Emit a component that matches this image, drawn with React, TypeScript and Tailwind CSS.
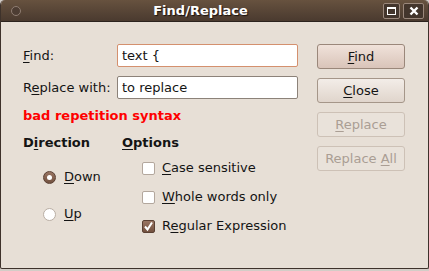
import React from 'react';

const font = { fontFamily: '"DejaVu Sans", Verdana, sans-serif' };

function U({ children }: { children: React.ReactNode }) {
  return <span className="underline decoration-1 underline-offset-[2px]">{children}</span>;
}

function Radio({ checked }: { checked?: boolean }) {
  if (checked) {
    return (
      <span className="flex h-[13px] w-[13px] items-center justify-center rounded-full border border-[#5a4033] bg-gradient-to-b from-[#9a7664] to-[#73513f]">
        <span className="h-[5px] w-[5px] rounded-full bg-white" />
      </span>
    );
  }
  return <span className="h-[13px] w-[13px] rounded-full border border-[#b9aea4] bg-white" />;
}

function Check({ checked }: { checked?: boolean }) {
  if (checked) {
    return (
      <span className="flex h-[13px] w-[13px] items-center justify-center rounded-[2px] border border-[#5a4033] bg-gradient-to-b from-[#9a7664] to-[#73513f]">
        <svg width="11" height="11" viewBox="0 0 11 11">
          <path d="M2 5.5 L4.5 8.5 L9 1.5" fill="none" stroke="white" strokeWidth="2" />
        </svg>
      </span>
    );
  }
  return <span className="h-[13px] w-[13px] rounded-[2px] border border-[#b3a79d] bg-white" />;
}

function Btn({ children, kind }: { children: React.ReactNode; kind: 'default' | 'normal' | 'disabled' }) {
  const cls =
    kind === 'default'
      ? 'border-[#9a877a] bg-gradient-to-b from-[#f0e2da] to-[#d9c4b9] text-[#141414]'
      : kind === 'normal'
        ? 'border-[#a59689] bg-gradient-to-b from-[#f3ede8] to-[#e0d5cc] text-[#141414]'
        : 'border-[#cdc1b6] bg-[#e9e2da] text-[#aa9e94]';
  return (
    <div className={`flex h-[25px] w-[88px] items-center justify-center rounded-[3px] border text-[13px] ${cls}`}>
      <span>{children}</span>
    </div>
  );
}

export default function App() {
  return (
    <div className="h-[271px] w-[429px] bg-[#d3cdc7]" style={font}>
      <div className="flex h-[269px] w-[429px] flex-col overflow-hidden rounded-t-[5px] rounded-b-[2px] border-x border-b border-[#3e322b] bg-[#e7dfd6]">
        {/* Title bar */}
        <div className="relative flex h-[22px] shrink-0 items-center justify-center border-b border-[#2c231e] bg-gradient-to-b from-[#67523f] to-[#4a3a2f] pl-[22px] pr-[50px]">
          <span className="absolute left-[10px] top-[6px] h-[10px] w-[10px] rounded-full border border-[#8f7d72] bg-[#4d3d33]" />
          <span className="text-[13px] font-bold text-white [text-shadow:1px_1px_1px_#1a120e]">Find/Replace</span>
          <div className="absolute right-[4px] top-[3px] flex gap-[3px]">
            <div className="flex h-[16px] w-[17px] items-center justify-center rounded-[2px] border border-[#9a877b] bg-[#43352c]">
              <span className="h-[8px] w-[9px] border border-t-2 border-white" />
            </div>
            <div className="flex h-[16px] w-[21px] items-center justify-center rounded-[2px] border border-[#9a877b] bg-[#43352c]">
              <svg width="10" height="10" viewBox="0 0 10 10">
                <path d="M1.5 1.5 L8.5 8.5 M8.5 1.5 L1.5 8.5" stroke="white" strokeWidth="2.4" />
              </svg>
            </div>
          </div>
        </div>

        {/* Body */}
        <div className="flex flex-1 pl-[22px] pr-[23px] pt-[22px] text-[13px] leading-[16px] text-[#141414]">
          <div className="flex w-[275px] flex-col">
            <div className="flex h-[23px] items-center">
              <span className="w-[94px]">
                <U>F</U>ind:
              </span>
              <div className="flex h-[23px] w-[181px] items-center rounded-[2px] border border-[#d4906e] bg-white px-[4px]">
                <span>text {'{'}</span>
              </div>
            </div>
            <div className="mt-[9px] flex h-[23px] items-center">
              <span className="w-[94px]">
                R<U>e</U>place with:
              </span>
              <div className="flex h-[23px] w-[181px] items-center rounded-[2px] border border-[#8c8279] bg-white px-[4px]">
                <span>to replace</span>
              </div>
            </div>
            <div className="mt-[9px] font-bold text-[#ff0000]">bad repetition syntax</div>

            <div className="mt-[11px] flex">
              <div className="flex w-[99px] flex-col">
                <div className="font-bold">
                  D<U>i</U>rection
                </div>
                <div className="mt-[18px] flex h-[16px] items-center gap-[8px] pl-[20px]">
                  <Radio checked />
                  <span>
                    <U>D</U>own
                  </span>
                </div>
                <div className="mt-[21px] flex h-[16px] items-center gap-[8px] pl-[20px]">
                  <Radio />
                  <span>
                    <U>U</U>p
                  </span>
                </div>
              </div>
              <div className="flex flex-col">
                <div className="font-bold">
                  <U>O</U>ptions
                </div>
                <div className="mt-[9px] flex h-[16px] items-center gap-[7px] pl-[20px]">
                  <Check />
                  <span>
                    <U>C</U>ase sensitive
                  </span>
                </div>
                <div className="mt-[13px] flex h-[16px] items-center gap-[7px] pl-[20px]">
                  <Check />
                  <span>
                    <U>W</U>hole words only
                  </span>
                </div>
                <div className="mt-[13px] flex h-[16px] items-center gap-[7px] pl-[20px]">
                  <Check checked />
                  <span>
                    R<U>e</U>gular Expression
                  </span>
                </div>
              </div>
            </div>
          </div>

          <div className="ml-auto flex flex-col gap-[9px]">
            <Btn kind="default">
              <U>F</U>ind
            </Btn>
            <Btn kind="normal">
              <U>C</U>lose
            </Btn>
            <Btn kind="disabled">
              <U>R</U>eplace
            </Btn>
            <Btn kind="disabled">
              Replace <U>A</U>ll
            </Btn>
          </div>
        </div>
      </div>
    </div>
  );
}
